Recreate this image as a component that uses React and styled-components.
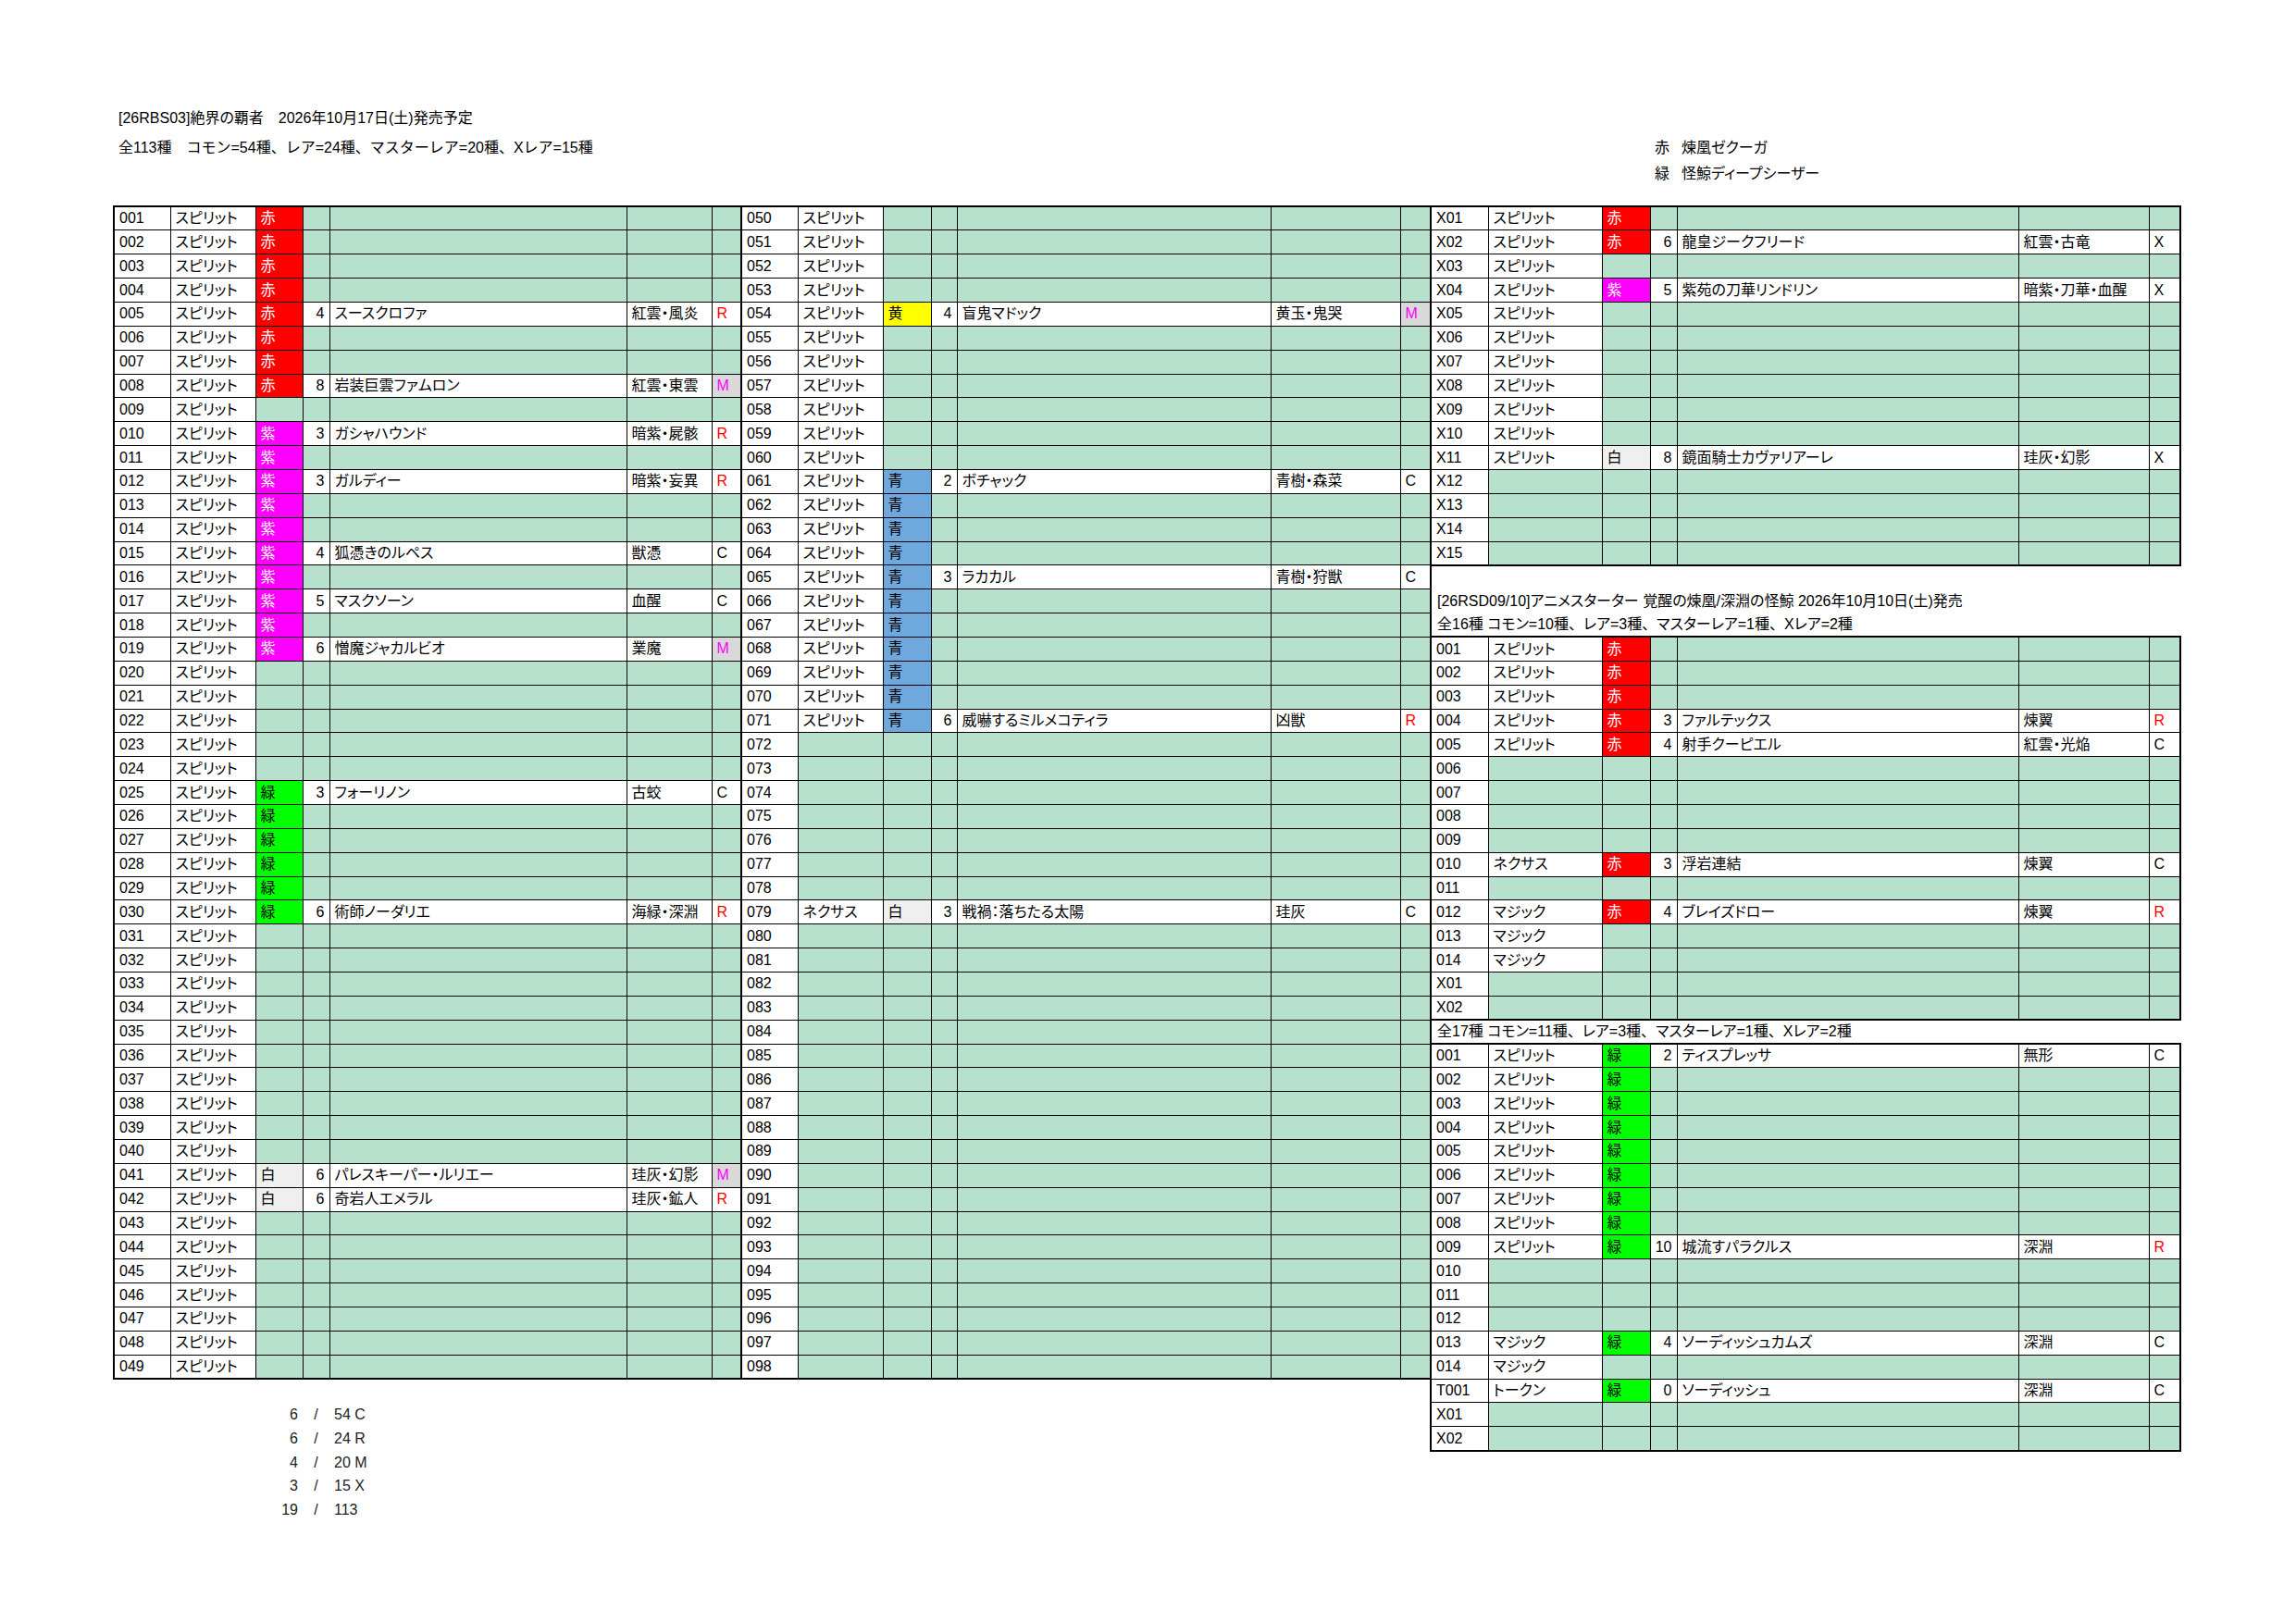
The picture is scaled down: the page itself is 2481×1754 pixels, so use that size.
import React from "react";
import styled, { createGlobalStyle } from "styled-components";

const GlobalStyle = createGlobalStyle`
  html, body {
    margin: 0;
    padding: 0;
    background: #ffffff;
  }
  body {
    font-family: "Liberation Sans", "Noto Sans CJK JP", sans-serif;
    color: #000000;
  }
`;

const MINT = "#b7e1cd";
const ROW_H = 25.86;

const SWATCH = {
  赤: { bg: "#ff0000", fg: "#ffffff" },
  紫: { bg: "#ff00ff", fg: "#ffffff" },
  緑: { bg: "#00ff00", fg: "#000000" },
  青: { bg: "#6fa8dc", fg: "#000000" },
  黄: { bg: "#ffff00", fg: "#000000" },
  白: { bg: "#efefef", fg: "#000000" },
};

const RARITY_COLOR = { R: "#ff0000", M: "#ff00ff", C: "#000000", X: "#000000" };

const COLS = [
  61, 92, 51, 29, 321, 92, 32,
  61, 92, 52, 28, 339, 140, 33,
  62, 123, 52, 29, 369, 141, 34,
];

const range = (a, b) => Array.from({ length: b - a + 1 }, (_, i) => a + i);
const pad = (n) => String(n).padStart(3, "0");
const fill = (nums, v) => Object.fromEntries(nums.map((n) => [n, v]));
const r = (no, type = "", color, cost, name, attr, rarity) => ({
  no, type, color, cost, name, attr, rarity,
});

// 本弾 001-049
const leftColors = {
  ...fill(range(1, 8), "赤"),
  ...fill(range(10, 19), "紫"),
  ...fill(range(25, 30), "緑"),
  41: "白",
  42: "白",
};
const leftCards = {
  5: [4, "スースクロファ", "紅雲・風炎", "R"],
  8: [8, "岩装巨雲ファムロン", "紅雲・東雲", "M"],
  10: [3, "ガシャハウンド", "暗紫・屍骸", "R"],
  12: [3, "ガルディー", "暗紫・妄異", "R"],
  15: [4, "狐憑きのルペス", "獣憑", "C"],
  17: [5, "マスクソーン", "血醒", "C"],
  19: [6, "憎魔ジャカルビオ", "業魔", "M"],
  25: [3, "フォーリノン", "古蛟", "C"],
  30: [6, "術師ノーダリエ", "海緑・深淵", "R"],
  41: [6, "パレスキーパー・ルリエー", "珪灰・幻影", "M"],
  42: [6, "奇岩人エメラル", "珪灰・鉱人", "R"],
};
const LEFT = range(1, 49).map((n) =>
  r(pad(n), "スピリット", leftColors[n], ...(leftCards[n] || []))
);

// 本弾 050-098
const midColors = { 54: "黄", ...fill(range(61, 71), "青"), 79: "白" };
const midCards = {
  54: [4, "盲鬼マドック", "黄玉・鬼哭", "M"],
  61: [2, "ボチャック", "青樹・森菜", "C"],
  65: [3, "ラカカル", "青樹・狩獣", "C"],
  71: [6, "威嚇するミルメコティラ", "凶獣", "R"],
  79: [3, "戦禍：落ちたる太陽", "珪灰", "C"],
};
const midType = (n) => (n <= 71 ? "スピリット" : n === 79 ? "ネクサス" : "");
const MID = range(50, 98).map((n) =>
  r(pad(n), midType(n), midColors[n], ...(midCards[n] || []))
);

// Xレア
const XRARE = [
  r("X01", "スピリット", "赤"),
  r("X02", "スピリット", "赤", 6, "龍皇ジークフリード", "紅雲・古竜", "X"),
  r("X03", "スピリット"),
  r("X04", "スピリット", "紫", 5, "紫苑の刀華リンドリン", "暗紫・刀華・血醒", "X"),
  ...range(5, 10).map((n) => r("X" + String(n).padStart(2, "0"), "スピリット")),
  r("X11", "スピリット", "白", 8, "鏡面騎士カヴァリアーレ", "珪灰・幻影", "X"),
  ...range(12, 15).map((n) => r("X" + n)),
];

// 煉凰デッキ
const DECK_RED = [
  r("001", "スピリット", "赤"),
  r("002", "スピリット", "赤"),
  r("003", "スピリット", "赤"),
  r("004", "スピリット", "赤", 3, "ファルテックス", "煉翼", "R"),
  r("005", "スピリット", "赤", 4, "射手クーピエル", "紅雲・光焔", "C"),
  r("006"),
  r("007"),
  r("008"),
  r("009"),
  r("010", "ネクサス", "赤", 3, "浮岩連結", "煉翼", "C"),
  r("011"),
  r("012", "マジック", "赤", 4, "ブレイズドロー", "煉翼", "R"),
  r("013", "マジック"),
  r("014", "マジック"),
  r("X01"),
  r("X02"),
];

// 怪鯨デッキ
const DECK_GREEN = [
  r("001", "スピリット", "緑", 2, "ティスプレッサ", "無形", "C"),
  ...range(2, 8).map((n) => r(pad(n), "スピリット", "緑")),
  r("009", "スピリット", "緑", 10, "城流すパラクルス", "深淵", "R"),
  r("010"),
  r("011"),
  r("012"),
  r("013", "マジック", "緑", 4, "ソーディッシュカムズ", "深淵", "C"),
  r("014", "マジック"),
  r("T001", "トークン", "緑", 0, "ソーディッシュ", "深淵", "C"),
  r("X01"),
  r("X02"),
];

const SUMMARY = [
  ["6", "54 C"],
  ["6", "24 R"],
  ["4", "20 M"],
  ["3", "15 X"],
  ["19", "113"],
];

const Page = styled.div`
  padding: 114px 0 40px 122px;
`;

const Sheet = styled.table`
  border-collapse: collapse;
  table-layout: fixed;
  width: ${COLS.reduce((a, b) => a + b, 0)}px;
  font-size: 16px;
  font-feature-settings: "palt";
  line-height: 1;
`;

const Row = styled.tr`
  height: ${(p) => p.$h || ROW_H}px;
`;

const Cell = styled.td`
  padding: 0 5px;
  border-style: solid;
  border-color: #000000;
  border-width: ${(p) => `${p.$top ? 2 : 1}px ${p.$right ? 2 : 1}px ${p.$bottom ? 2 : 1}px ${p.$left ? 2 : 1}px`};
  background: ${(p) => p.$bg || "#ffffff"};
  color: ${(p) => p.$fg || "#000000"};
  text-align: ${(p) => p.$align || "left"};
  white-space: nowrap;
  overflow: hidden;
  vertical-align: middle;
`;

const Gap = styled.td`
  padding: 0;
  border: none;
`;

const Note = styled.td`
  padding: 0 6px;
  border: none;
  white-space: nowrap;
  vertical-align: middle;
`;

const TitleCell = styled.td`
  padding: 0 5px;
  border: none;
  white-space: nowrap;
  vertical-align: middle;
  font-feature-settings: ${(p) => (p.$mono ? "normal" : "palt")};
`;

// full-width punctuation keeps its em box, as in the sheet
const Punct = styled.span`
  font-feature-settings: normal;
`;

const SumCell = styled.td`
  padding: 0 5px;
  border: none;
  color: #222222;
  text-align: ${(p) => p.$align || "left"};
  white-space: nowrap;
  vertical-align: middle;
`;

const jp = (text) =>
  text.split("、").flatMap((part, i) =>
    i === 0 ? [part] : [<Punct key={i}>、</Punct>, part]
  );

const cardCells = (item, key, first, last) => {
  const named = Boolean(item.name);
  const swatch = SWATCH[item.color];
  const edge = { $top: first, $bottom: last };
  return [
    <Cell key={key + "n"} {...edge} $left>
      {item.no}
    </Cell>,
    <Cell key={key + "t"} {...edge} $bg={item.type ? "#ffffff" : MINT}>
      {item.type}
    </Cell>,
    <Cell key={key + "c"} {...edge} $bg={swatch ? swatch.bg : MINT} $fg={swatch && swatch.fg}>
      {item.color}
    </Cell>,
    <Cell key={key + "k"} {...edge} $align="right" $bg={named ? "#ffffff" : MINT}>
      {item.cost}
    </Cell>,
    <Cell key={key + "m"} {...edge} $bg={named ? "#ffffff" : MINT}>
      {item.name}
    </Cell>,
    <Cell key={key + "a"} {...edge} $bg={named ? "#ffffff" : MINT}>
      {item.attr}
    </Cell>,
    <Cell
      key={key + "r"}
      {...edge}
      $right
      $bg={!named ? MINT : item.rarity === "M" ? "#d9d9d9" : "#ffffff"}
      $fg={RARITY_COLOR[item.rarity]}
    >
      {item.rarity}
    </Cell>,
  ];
};

const boxCells = (list, i, key) =>
  cardCells(list[i], key, i === 0, i === list.length - 1);

const leftBlock = (row) => {
  if (row < LEFT.length) return boxCells(LEFT, row, "L" + row);
  const s = SUMMARY[row - 50];
  if (!s) return [<Gap key={"L" + row} colSpan={7} />];
  return [
    <Gap key="s0" colSpan={2} />,
    <SumCell key="s1" $align="right">{s[0]}</SumCell>,
    <SumCell key="s2" $align="center">/</SumCell>,
    <SumCell key="s3">{s[1]}</SumCell>,
    <Gap key="s4" colSpan={2} />,
  ];
};

const midBlock = (row) =>
  row < MID.length ? boxCells(MID, row, "M" + row) : [<Gap key={"M" + row} colSpan={7} />];

const NOTES = {
  15: "",
  16: "[26RSD09/10]アニメスターター 覚醒の煉凰/深淵の怪鯨 2026年10月10日(土)発売",
  17: "全16種 コモン=10種、レア=3種、マスターレア=1種、Xレア=2種",
  34: "全17種 コモン=11種、レア=3種、マスターレア=1種、Xレア=2種",
};

const rightBlock = (row) => {
  if (row < 15) return boxCells(XRARE, row, "X" + row);
  if (row in NOTES)
    return [
      <Note key={"N" + row} colSpan={7}>
        {jp(NOTES[row])}
      </Note>,
    ];
  if (row >= 18 && row < 34) return boxCells(DECK_RED, row - 18, "R" + row);
  if (row >= 35 && row < 52) return boxCells(DECK_GREEN, row - 35, "G" + row);
  return [<Gap key={"E" + row} colSpan={7} />];
};

export default function App() {
  return (
    <Page>
      <GlobalStyle />
      <Sheet>
        <colgroup>
          {COLS.map((w, i) => (
            <col key={i} style={{ width: w }} />
          ))}
        </colgroup>
        <thead>
          <Row $h={28}>
            <TitleCell colSpan={14}>[26RBS03]絶界の覇者　2026年10月17日(土)発売予定</TitleCell>
            <Gap colSpan={7} />
          </Row>
          <Row $h={35}>
            <TitleCell colSpan={14} $mono>
              全113種　コモン=54種、レア=24種、マスターレア=20種、Xレア=15種
            </TitleCell>
            <Gap colSpan={3} />
            <TitleCell>赤</TitleCell>
            <TitleCell colSpan={3}>煉凰ゼクーガ</TitleCell>
          </Row>
          <Row $h={21}>
            <Gap colSpan={17} />
            <TitleCell>緑</TitleCell>
            <TitleCell colSpan={3}>怪鯨ディープシーザー</TitleCell>
          </Row>
          <Row $h={25}>
            <Gap colSpan={21} />
          </Row>
        </thead>
        <tbody>
          {range(0, 54).map((row) => (
            <Row key={row}>
              {leftBlock(row)}
              {midBlock(row)}
              {rightBlock(row)}
            </Row>
          ))}
        </tbody>
      </Sheet>
    </Page>
  );
}
